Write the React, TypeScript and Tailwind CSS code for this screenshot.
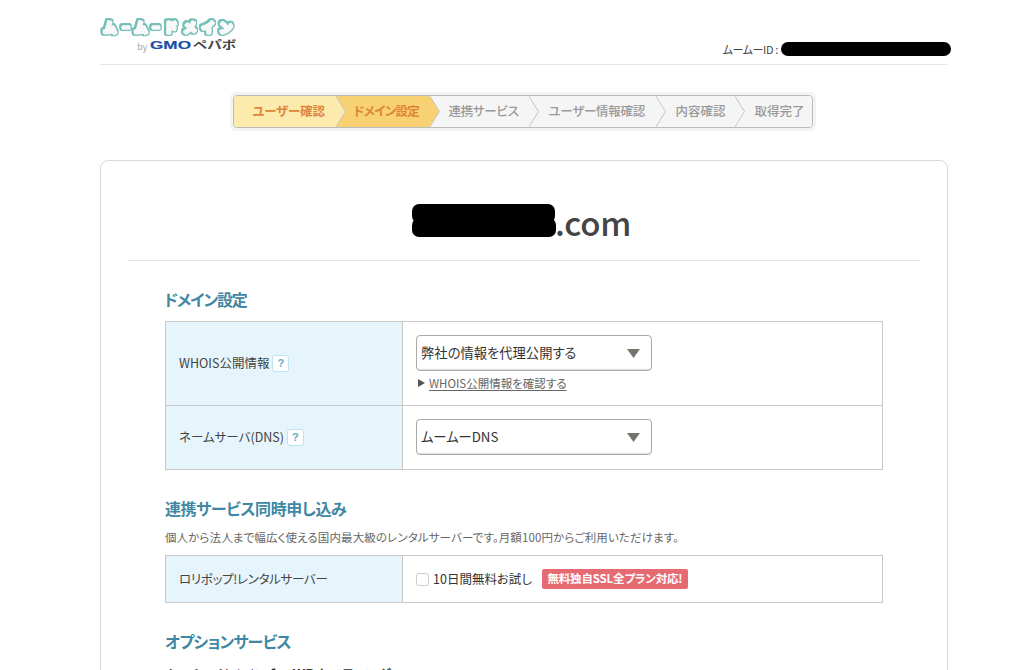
import { Fragment } from 'react';
import type { ReactNode } from 'react';

type Step = {
  label: string;
  box: string;
  text: string;
  fill: string;
  next: string;
};

const steps: Step[] = [
  {
    label: 'ユーザー確認',
    box: 'w-[102px] bg-[#fdebad] pl-[19px]',
    text: 'font-bold text-[#dd8538] tracking-[-0.2px]',
    fill: '#fdebad',
    next: '#f8d272',
  },
  {
    label: 'ドメイン設定',
    box: 'w-[84px] bg-[#f8d272] pl-[8px]',
    text: 'font-bold text-[#dd8538] tracking-[-0.7px]',
    fill: '#f8d272',
    next: '#f5f5f5',
  },
  {
    label: '連携サービス',
    box: 'w-[89px] bg-[#f5f5f5] pl-[9px]',
    text: 'font-medium text-[#999] tracking-[-0.3px]',
    fill: '#f5f5f5',
    next: '#f5f5f5',
  },
  {
    label: 'ユーザー情報確認',
    box: 'w-[117px] bg-[#f5f5f5] pl-[10px]',
    text: 'font-medium text-[#999] tracking-[-0.25px]',
    fill: '#f5f5f5',
    next: '#f5f5f5',
  },
  {
    label: '内容確認',
    box: 'w-[69px] bg-[#f5f5f5] pl-[10px]',
    text: 'font-medium text-[#999]',
    fill: '#f5f5f5',
    next: '#f5f5f5',
  },
  {
    label: '取得完了',
    box: 'flex-1 bg-[#f5f5f5] pl-[10px]',
    text: 'font-medium text-[#999]',
    fill: '#f5f5f5',
    next: '',
  },
];

const Logo = () => (
  <svg width="140" height="40" viewBox="0 0 140 40" className="-ml-px block">
    <text
      y="17.5"
      fontSize="13"
      fontWeight="700"
      fill="#dcdcdc"
      stroke="#f8f8f8"
      strokeWidth="3.4"
      strokeLinejoin="round"
      textAnchor="middle"
      className="[filter:drop-shadow(1.4px_0_0_#74c0b9)_drop-shadow(-1.4px_0_0_#74c0b9)_drop-shadow(0_1.2px_0_#74c0b9)_drop-shadow(0_-1.2px_0_#74c0b9)]"
    >
      <tspan x="11">ム</tspan>
      <tspan x="27" fontSize="7" dy="-2">ー</tspan>
      <tspan x="42" dy="2">ム</tspan>
      <tspan x="57" fontSize="7" dy="-2">ー</tspan>
      <tspan x="72" dy="2">ド</tspan>
      <tspan x="91">メ</tspan>
      <tspan x="109">イ</tspan>
      <tspan x="127">ン</tspan>
    </text>
    <text x="38" y="36" fontSize="9" fill="#aaa">
      by
    </text>
    <text
      x="51"
      y="35"
      fontSize="11"
      fontWeight="700"
      fill="#1b4fa8"
      stroke="#1b4fa8"
      strokeWidth="0.2"
      textLength="41"
      lengthAdjust="spacingAndGlyphs"
      className="font-['Liberation_Sans']"
    >
      GMO
    </text>
    <text
      x="94"
      y="35"
      fontSize="11"
      fontWeight="700"
      fill="#444"
      textLength="43"
      lengthAdjust="spacingAndGlyphs"
    >
      ペパボ
    </text>
  </svg>
);

const StepBar = () => (
  <div className="mx-auto mt-[27px] w-[586px] -translate-x-px rounded-md bg-[#f3f3f3] p-[3px]">
    <ol className="flex h-[33px] overflow-hidden rounded border border-[#bbb]">
      {steps.map((step) => (
        <Fragment key={step.label}>
          <li
            className={`flex shrink-0 items-center whitespace-nowrap text-[12.5px] ${step.box} ${step.text}`}
          >
            {step.label}
          </li>
          {step.next && (
            <svg width="10" height="31" viewBox="0 0 10 31" className="shrink-0">
              <rect width="10" height="31" fill={step.next} />
              <path d="M-1 -1L9.5 15.5L-1 32Z" fill={step.fill} />
              <path d="M-.5 -.5L9.5 15.5L-.5 31.5" fill="none" stroke="#c4c4c4" />
            </svg>
          )}
        </Fragment>
      ))}
    </ol>
  </div>
);

const Heading = ({ children }: { children: ReactNode }) => (
  <h2 className="text-base font-bold leading-6 text-[#3f87a3]">{children}</h2>
);

const Help = () => (
  <span className="flex size-[17px] items-center justify-center rounded-[3px] border border-[#bfe3ee] bg-white font-['Liberation_Sans'] text-[11px] font-bold leading-none text-[#5fb0cb]">
    ?
  </span>
);

type RowProps = {
  label: string;
  help?: boolean;
  className: string;
  children: ReactNode;
};

const Row = ({ label, help, className, children }: RowProps) => (
  <div className={`flex ${className}`}>
    <div className="flex w-[237px] shrink-0 items-center gap-[3px] border-r border-[#c8c8c8] bg-[#e6f5fb] pl-[13px] text-[12.5px] text-[#444]">
      <span className="whitespace-nowrap">{label}</span>
      {help && <Help />}
    </div>
    <div className="flex-1 px-[13px]">{children}</div>
  </div>
);

const Select = ({ value }: { value: string }) => (
  <button
    type="button"
    className="flex h-9 w-[236px] items-center justify-between rounded border border-[#aaa] bg-white pb-px pl-1 pr-[11px] text-[13.3px] text-[#333] shadow-[inset_0_-1px_1px_#ddd]"
  >
    {value}
    <svg width="13" height="9" viewBox="0 0 13 9" className="mt-px">
      <path d="M0 0H13L6.5 9Z" fill="#74746c" />
    </svg>
  </button>
);

const App = () => {
  return (
    <div className="h-[670px] w-[1024px] overflow-hidden bg-white font-['Noto_Sans_CJK_JP',sans-serif] text-[#444] [font-feature-settings:'palt']">
      <header className="ml-[100px] flex h-[65px] w-[847px] justify-between border-b border-[#e4e4e4]">
        <div className="pt-[14px]">
          <Logo />
        </div>
        <div className="-mr-1 flex h-[14px] translate-y-[42px] items-center gap-[3px] text-[11px]">
          <span className="tracking-[-0.35px]">ムームーID :</span>
          <span className="h-[14px] w-[170px] rounded-full bg-black" />
        </div>
      </header>

      <div className="ml-[100px] w-[847px]">
        <StepBar />
      </div>

      <main className="ml-[100px] mt-[29px] h-[560px] w-[848px] rounded-lg border border-[#d9d9d9] px-[27px]">
        <div className="flex h-[100px] items-start border-b border-[#e4e4e4] pl-[284px] pt-[43px]">
          <div className="flex flex-col">
            <span className="h-[19px] w-[143px] rounded-[7px] bg-black" />
            <span className="-mt-[5px] h-[19px] w-36 rounded-[7px] bg-black" />
          </div>
          <h1 className="-ml-px text-[33px] font-medium leading-[36px] tracking-[-0.2px]">.com</h1>
        </div>

        <div className="pl-[37px] pr-9">
          <section className="pt-[26px]">
            <div className="-ml-px tracking-[-1.1px]">
              <Heading>ドメイン設定</Heading>
            </div>
            <div className="mt-[10px] w-[718px] border border-[#c8c8c8]">
              <Row label="WHOIS公開情報" help className="h-[83px]">
                <div className="pt-[13px]">
                  <Select value="弊社の情報を代理公開する" />
                  <a href="#" className="mt-[3px] flex items-center gap-1 pl-[2px] text-[11.5px] leading-[18px] text-[#666]">
                    <svg width="7" height="8" viewBox="0 0 7 8">
                      <path d="M0 0L7 4L0 8Z" fill="#555" />
                    </svg>
                    <span className="underline underline-offset-2">WHOIS公開情報を確認する</span>
                  </a>
                </div>
              </Row>
              <Row
                label="ネームサーバ(DNS)"
                help
                className="h-[64px] border-t border-[#c8c8c8]"
              >
                <div className="pt-[13px]">
                  <Select value="ムームーDNS" />
                </div>
              </Row>
            </div>
          </section>

          <section className="pt-[26px]">
            <div className="tracking-[-0.4px]">
              <Heading>連携サービス同時申し込み</Heading>
            </div>
            <p className="mt-[7px] text-[11.5px] leading-[20px] tracking-[0.12px] text-[#666]">
              個人から法人まで幅広く使える国内最大級のレンタルサーバーです。月額100円からご利用いただけます。
            </p>
            <div className="mt-[8px] w-[718px] border border-[#c8c8c8]">
              <Row label="ロリポップ!レンタルサーバー" className="h-[46px] tracking-[-0.3px]">
                <div className="flex h-full items-center text-[12.5px] tracking-normal">
                  <span className="size-[13px] rounded-[3px] border border-[#ccc] bg-white" />
                  <span className="ml-1 text-[#333]">10日間無料お試し</span>
                  <span className="ml-[10px] flex h-5 w-[146px] items-center justify-center rounded-[2px] bg-[#e66a72] text-[11.5px] font-bold tracking-[-0.15px] text-white">
                    無料独自SSL全プラン対応!
                  </span>
                </div>
              </Row>
            </div>
          </section>

          <section className="pt-[26px]">
            <div className="tracking-[-0.8px]">
              <Heading>オプションサービス</Heading>
            </div>
            <h3 className="mt-[11px] text-[14px] font-bold leading-[20px] tracking-[-0.1px] text-[#333]">
              ムームードメイン for WPホスティング
            </h3>
          </section>
        </div>
      </main>
    </div>
  );
};

export default App;
